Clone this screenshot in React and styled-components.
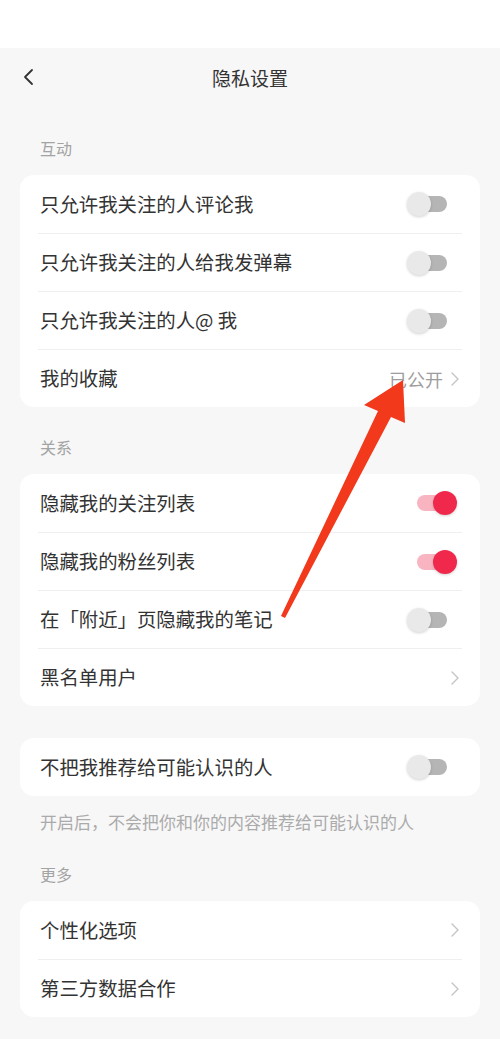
import React from 'react';
import styled, { createGlobalStyle } from 'styled-components';

const GlobalStyle = createGlobalStyle`
  * { box-sizing: border-box; }
  body {
    margin: 0;
    background: #f7f7f7;
    font-family: "Noto Sans CJK SC", "Noto Sans", sans-serif;
    color: #333;
  }
`;

const Page = styled.div`
  position: relative;
  width: 500px;
  min-height: 1039px;
  background: #f7f7f7;
  padding-bottom: 23px;
`;

const StatusBar = styled.div`
  height: 48px;
  background: #fff;
`;

const Header = styled.div`
  height: 60px;
  display: flex;
  align-items: center;
  justify-content: center;
  position: relative;
`;

const BackButton = styled.div`
  position: absolute;
  left: 18px;
  top: 17px;
  width: 20px;
  height: 24px;
  display: flex;
  align-items: center;
  justify-content: center;
`;

const Title = styled.h1`
  margin: 0;
  font-size: 19px;
  font-weight: 400;
  color: #333;
  line-height: 24px;
`;

const SectionLabel = styled.div`
  padding: 28px 40px 15px;
  font-size: 16px;
  line-height: 24px;
  color: #a3a3a3;
`;

const Card = styled.div`
  margin: ${p => p.$top || 0}px 20px 0;
  background: #fff;
  border-radius: 14px;
  overflow: hidden;
`;

const Row = styled.div`
  height: 58px;
  margin: 0 18px;
  padding: 0 2px;
  display: flex;
  align-items: center;
  justify-content: space-between;
  border-top: ${p => (p.$first ? 'none' : '1px solid #efefef')};
`;

const RowLabel = styled.span`
  font-size: 19.4px;
  color: #333;
  line-height: 24px;
  margin-top: -1px;
`;

const RowRight = styled.div`
  display: flex;
  align-items: center;
  gap: 7px;
`;

const Value = styled.span`
  font-size: 18px;
  color: #9d9d9d;
`;

const SwitchWrap = styled.div`
  position: relative;
  width: 50px;
  height: 24px;
  margin-right: 3px;
`;

const Track = styled.div`
  position: absolute;
  left: 10px;
  top: 4px;
  width: 30px;
  height: 16px;
  border-radius: 8px;
  background: ${p => (p.$on ? '#f8b5c1' : '#b5b5b5')};
`;

const Knob = styled.div`
  position: absolute;
  top: 0;
  left: ${p => (p.$on ? '26px' : '0')};
  width: 24px;
  height: 24px;
  border-radius: 50%;
  background: ${p => (p.$on ? '#f0284b' : '#e9e9e9')};
  box-shadow: 0 1px 3px rgba(0, 0, 0, 0.18);
`;

const Hint = styled.div`
  padding: 14px 40px 0;
  font-size: 17px;
  line-height: 24px;
  color: #ababab;
`;

const ArrowLayer = styled.svg`
  position: absolute;
  left: 0;
  top: 0;
  pointer-events: none;
`;

const Chevron = () => (
  <svg width="10" height="16" viewBox="0 0 10 16">
    <path d="M2 2 L8 8 L2 14" fill="none" stroke="#c4c4c4" strokeWidth="1.4" strokeLinecap="round" strokeLinejoin="round" />
  </svg>
);

const Switch = ({ on }) => (
  <SwitchWrap>
    <Track $on={on} />
    <Knob $on={on} />
  </SwitchWrap>
);

const SettingRow = ({ label, toggle, on, value, first }) => (
  <Row $first={first}>
    <RowLabel>{label}</RowLabel>
    <RowRight>
      {toggle ? (
        <Switch on={on} />
      ) : (
        <>
          {value && <Value>{value}</Value>}
          <Chevron />
        </>
      )}
    </RowRight>
  </Row>
);

export default function App() {
  return (
    <Page>
      <GlobalStyle />
      <StatusBar />
      <Header>
        <BackButton>
          <svg width="12" height="18" viewBox="0 0 12 18">
            <path d="M10 2 L3 9 L10 16" fill="none" stroke="#333" strokeWidth="1.8" strokeLinecap="round" strokeLinejoin="round" />
          </svg>
        </BackButton>
        <Title>隐私设置</Title>
      </Header>

      <SectionLabel>互动</SectionLabel>
      <Card>
        <SettingRow first label="只允许我关注的人评论我" toggle />
        <SettingRow label="只允许我关注的人给我发弹幕" toggle />
        <SettingRow label="只允许我关注的人@ 我" toggle />
        <SettingRow label="我的收藏" value="已公开" />
      </Card>

      <SectionLabel>关系</SectionLabel>
      <Card>
        <SettingRow first label="隐藏我的关注列表" toggle on />
        <SettingRow label="隐藏我的粉丝列表" toggle on />
        <SettingRow label="在「附近」页隐藏我的笔记" toggle />
        <SettingRow label="黑名单用户" />
      </Card>

      <Card $top={32}>
        <SettingRow first label="不把我推荐给可能认识的人" toggle />
      </Card>
      <Hint>开启后，不会把你和你的内容推荐给可能认识的人</Hint>

      <SectionLabel>更多</SectionLabel>
      <Card>
        <SettingRow first label="个性化选项" />
        <SettingRow label="第三方数据合作" />
      </Card>

      <ArrowLayer width="500" height="1039" viewBox="0 0 500 1039">
        <polygon
          points="403,380 364,405 378,411 281,616 285,618 391,417 405,423"
          fill="#f2391c"
        />
      </ArrowLayer>
    </Page>
  );
}
